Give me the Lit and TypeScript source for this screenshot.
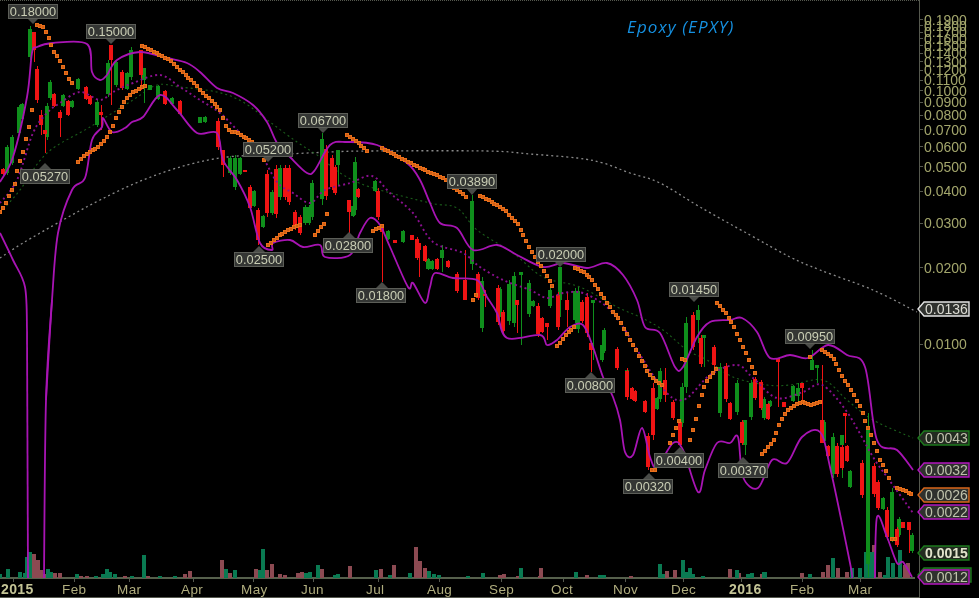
import { LitElement, css, html, svg } from 'lit';
import { customElement } from 'lit/decorators.js';

type Pt = [number, number];
// x, high, low, optional body top / bottom
type Candle = number[];

const W = 979;
const H = 598;
const AXIS_X = 919;

const yOf = (p: number) => 90.5 - 253.5 * Math.log10(p / 0.1);

const upper: Pt[] = [[0,182],[13,157],[27,97],[32,53],[37,47],[53,43],[87,44],[92,72],[100,80],[107,75],[117,60],[140,52],[167,58],[187,63],[200,72],[217,88],[233,93],[253,105],[267,122],[277,143],[290,157],[307,173],[315,170],[330,145],[347,142],[377,145],[407,163],[420,180],[430,203],[440,223],[457,228],[473,250],[497,245],[517,255],[543,267],[563,263],[587,268],[607,263],[623,275],[637,300],[645,327],[660,333],[675,367],[683,367],[697,337],[710,322],[730,320],[742,318],[757,332],[770,358],[790,355],[808,358],[828,345],[847,355],[865,367],[877,440],[897,450],[913,470]];
// the lower band falls off the chart twice, so it is drawn in pieces
const lowerParts: Pt[][] = [
  [[0,233],[13,260],[25,287],[27,330]],
  [[27,330],[28,578]],
  [[44,578],[46,400],[52,300]],
  [[46,400],[52,300],[58,233],[72,190],[85,178],[92,140],[102,127],[103,118],[112,132],[125,128],[132,122],[143,117],[160,95],[177,110],[197,133],[217,133],[223,160],[237,180],[250,207],[260,243],[272,250],[273,243],[290,240],[303,247],[320,245],[325,257],[350,255],[360,233],[370,218],[380,225],[390,247],[408,287],[413,283],[425,303],[430,287],[435,273],[453,278],[477,280],[487,297],[497,313],[507,338],[540,335],[547,345],[557,340],[570,327],[583,325],[593,347],[603,377],[613,397],[620,420],[625,452],[633,455],[642,428],[650,457],[657,467],[673,443],[683,450],[698,492],[705,470],[717,443],[730,443],[738,437],[743,477],[758,488],[772,460],[787,463],[802,437],[820,432],[830,467],[850,563],[852,578]],
  [[875,578],[877,517],[887,537],[897,563],[903,562],[912,577]],
];
const sma20: Pt[] = [[0,203],[17,180],[33,133],[47,113],[60,103],[80,92],[100,100],[113,92],[133,83],[160,75],[180,87],[200,100],[220,113],[240,133],[260,153],[277,182],[293,193],[310,203],[325,190],[350,183],[372,176],[390,193],[413,213],[433,242],[463,253],[480,267],[503,280],[530,290],[547,298],[563,293],[583,293],[607,307],[623,327],[660,385],[683,400],[710,375],[737,365],[753,378],[777,398],[803,392],[822,385],[847,412],[873,457],[887,477],[913,513]];
const sma50: Pt[] = [[0,213],[20,190],[47,153],[90,127],[133,100],[157,85],[180,87],[217,92],[243,102],[270,122],[297,142],[320,157],[340,173],[370,187],[430,203],[457,208],[477,230],[513,253],[543,277],[580,287],[617,307],[640,317],[663,330],[687,350],[707,360],[733,377],[767,385],[790,385],[823,380],[847,400],[873,420],[913,438]];
const sma200: Pt[] = [[0,258],[23,243],[63,220],[100,200],[143,180],[187,165],[227,157],[267,155],[330,152],[370,151],[487,151],[530,154],[577,158],[603,163],[630,173],[660,183],[700,207],[750,235],[790,257],[820,270],[873,290],[917,312]];

const sar: Pt[][] = [
  [[0,212],[5,205],[10,193],[15,183],[18,168],[23,153],[25,143],[28,133],[31,116],[33,102]],
  [[37,25],[42,26],[46,32],[49,39],[52,46],[55,53],[58,57],[61,62],[63,67],[66,73],[68,78],[72,83],[74,88]],
  [[78,162],[83,157],[88,153],[93,150],[98,147],[103,143],[108,136],[112,128],[117,115],[121,108],[124,103],[127,98],[132,93],[137,90],[142,87],[147,85]],
  [[142,46],[150,50],[160,55],[170,60],[180,70],[193,82],[205,95],[220,109],[223,117],[225,125],[230,131],[237,133],[250,140],[257,147],[266,164]],
  [[268,245],[273,241],[280,235],[290,229],[300,225]],
  [[315,235],[320,228],[325,222],[328,207]],
  [[347,135],[358,143],[370,153]],
  [[382,148],[395,155],[410,163],[425,170],[443,178],[455,188],[468,198]],
  [[373,231],[382,226]],
  [[480,196],[492,202],[505,210],[510,216],[517,223],[524,236],[530,248],[537,260],[543,270],[553,287]],
  [[473,300],[478,292]],
  [[557,346],[562,340],[567,333],[571,330],[575,327]],
  [[575,268],[583,272],[590,277],[597,287],[602,295],[607,303],[613,312],[620,320],[626,332],[632,343],[640,358],[648,372],[655,380],[662,385]],
  [[652,470],[657,470]],
  [[670,443],[675,430],[679,420]],
  [[682,359],[686,360]],
  [[690,440],[695,423],[700,400],[705,385],[710,377],[717,368]],
  [[717,303],[725,312],[730,320],[735,328],[740,340],[747,355],[753,370],[757,377]],
  [[762,454],[767,448],[773,442],[780,423],[784,416],[788,410],[795,405],[803,402],[812,405],[820,402]],
  [[810,357]],
  [[822,350],[833,358],[838,367],[843,377],[848,385],[853,393],[860,407],[864,417],[868,427],[875,445],[880,460],[887,473],[890,482]],
  [[892,539],[896,539]],
  [[897,488],[905,491],[913,495]],
];

const red: Candle[] = [
  [3,168,175],[34,32,62,32,50],[37,66,103],[41,110,135,115,125],[45,130,153,130,134],[54,93,107],[60,110,137,112,118],[68,100,116],[86,86,100],[90,95,105],[101,105,130,112,115],[111,45,105,45,60],[122,70,90],[141,50,90,50,75],[165,90,105],[180,100,115],[218,118,150],[223,150,177,150,165],[245,170,172],[250,185,210],[258,208,245,210,240],[267,170,217],[276,165,218],[285,165,200],[289,165,205],[295,210,230],[300,215,235],[326,145,200],[332,155,190],
  [335,165,195],[349,200,233,200,212],[358,188,198],[378,188,220],[382,225,282,225,232],[395,240,243],[412,235,240],[417,237,260],[419,243,277,243,250],[425,245,262],[437,258,270],[448,260,268],[465,250,300,280,300],[457,272,293],[478,272,300],[485,290,307,294,296],[498,285,325],[503,310,333],[517,300,333,300,305],[538,303,337],[542,317,333],[547,323,340,323,327],[558,292,330],[567,293,327,300,310],[582,300,323],[587,293,337],[591,343,372,343,350],[617,347,370],[627,368,400],[632,387,400],
  [635,390,402],[645,400,413],[653,383,440],[648,433,470],[665,368,402,380,395],[673,400,420],[680,420,447],[693,312,350],[701,335,367],[714,345,367],[726,363,402],[730,402,420],[742,420,445],[755,377,400],[761,380,410],[768,403,420],[778,358,407,358,362],[784,402,407],[802,383,400,383,388],[822,365,443,420,443],[828,445,457],[837,443,477],[842,445,470],[847,445,462],[845,413,443,413,416],[862,460,498],[874,463,497],[878,480,510],[887,507,540],[897,527,547],[903,522,528],[909,522,553,522,530],
];
const green: Candle[] = [
  [7,145,175],[12,135,165],[19,105,135],[22,103,120],[30,26,60],[47,103,140],[50,80,100],[63,94,107],[72,100,108],[78,78,90],[97,100,127],[108,60,97],[116,60,87],[127,72,90],[131,47,80],[144,68,103,68,80],[150,85,90],[158,85,100],[172,97,105],[200,117,123],[205,116,123],[230,156,175],[235,155,190],[240,157,175],[254,190,207],[263,215,228],[272,190,215],[280,165,200],[305,205,225],[309,205,225],[312,180,220],[322,133,205],
  [338,150,185,150,165],[353,205,217],[355,157,215],[375,180,192],[388,230,240],[403,230,243],[428,258,270],[432,260,270],[442,245,272,250,258],[472,195,270],[482,277,332],[500,287,317],[509,280,325],[514,272,327],[521,272,345,272,275],[529,280,317],[533,300,307],[550,288,308],[560,267,317,267,300],[575,288,323],[578,287,333],[593,300,360,300,303],[602,343,362],[604,328,353],
  [627,368,395],[657,397,410],[660,368,402],[682,383,427],[686,317,393],[698,305,343,310,320],[704,335,367,335,338],[720,363,417],[737,380,415],[745,420,455,420,445],[751,380,420],[764,397,420],[770,400,407],[793,385,402],[798,383,402,388,396],[812,350,370,360,370],[817,365,383,365,368],[824,420,443],[833,433,478],[842,435,478,435,445],[850,470,488],[868,413,577],[883,497,510],[892,488,542],[899,517,537],[912,533,553],
];

// x, top of bar
const volG: Pt[] = [[0,574],[8,569],[20,572],[25,573],[27,557],[30,552],[48,569],[51,572],[77,574],[96,576],[103,574],[107,569],[110,572],[115,574],[132,576],[144,555],[160,576],[175,576],[226,569],[235,570],[263,549],[260,570],[306,573],[310,572],[318,565],[335,575],[338,574],[376,570],[390,575],[410,573],[429,571],[434,574],[439,575],[468,576],[483,573],[521,568],[576,572],[600,575],[604,575],[660,564],[663,574],[683,560],[686,572],[690,568],[693,574],[703,576],[737,570],[748,574],[752,573],[764,572],[765,572],[810,574],[833,558],[852,568],[860,568],[866,552],[869,552],[872,552],[888,557],[893,563],[900,550],[885,575]];
const volR: Pt[] = [[34,554],[38,560],[41,570],[44,574],[55,573],[60,573],[81,576],[87,576],[125,576],[148,576],[185,574],[190,571],[222,560],[230,573],[256,569],[267,570],[272,564],[280,574],[285,575],[298,573],[302,572],[322,569],[350,566],[381,569],[394,565],[416,547],[420,561],[425,568],[500,575],[504,574],[518,576],[541,568],[540,576],[587,575],[631,576],[667,571],[675,570],[730,569],[739,573],[762,574],[802,573],[823,572],[828,565],[838,568],[847,572],[874,545],[880,572],[905,565],[908,563]];

const callouts: [string, number, number, number, number][] = [
  // text, box x, box y, tip x, tip y
  ['0.18000', 8, 4, 33, 24],
  ['0.15000', 86, 24, 111, 44],
  ['0.05270', 20, 169, 45, 163],
  ['0.05200', 243, 142, 268, 162],
  ['0.06700', 298, 113, 323, 133],
  ['0.02500', 234, 252, 259, 246],
  ['0.02800', 323, 238, 349, 232],
  ['0.03890', 447, 174, 472, 195],
  ['0.01800', 356, 288, 382, 282],
  ['0.02000', 536, 247, 560, 267],
  ['0.00800', 565, 378, 591, 372],
  ['0.01450', 669, 282, 694, 302],
  ['0.00950', 785, 329, 810, 349],
  ['0.00400', 654, 453, 680, 447],
  ['0.00370', 718, 463, 743, 457],
  ['0.00320', 623, 479, 649, 473],
];

const priceTags: [string, number, string][] = [
  ['0.0136', 309, 'white'],
  ['0.0043', 438, 'lime'],
  ['0.0032', 470, 'pink'],
  ['0.0026', 495, 'amber'],
  ['0.0022', 512, 'pink'],
  ['0.0015', 553, 'lime bold'],
  ['0.0013', 575, 'lime'],
  ['0.0012', 577, 'pink'],
];

const axisPrices = [0.19,0.18,0.17,0.16,0.15,0.14,0.13,0.12,0.11,0.1,0.09,0.08,0.07,0.06,0.05,0.04,0.03,0.02,0.01];

const months: [string, number, boolean][] = [
  ['2015',1,true],['Feb',62,false],['Mar',117,false],['Apr',181,false],['May',241,false],['Jun',301,false],['Jul',366,false],['Aug',427,false],['Sep',489,false],['Oct',551,false],['Nov',613,false],['Dec',671,false],['2016',729,true],['Feb',790,false],['Mar',848,false],
];

// catmull-rom through the points, the bands are rounded curves
function smooth(p: Pt[]): string {
  let d = `M${p[0][0]} ${p[0][1]}`;
  for (let i = 0; i < p.length - 1; i++) {
    const a = p[Math.max(i - 1, 0)];
    const b = p[i];
    const c = p[i + 1];
    const e = p[Math.min(i + 2, p.length - 1)];
    const c1x = b[0] + (c[0] - a[0]) / 6;
    const c1y = b[1] + (c[1] - a[1]) / 6;
    const c2x = c[0] - (e[0] - b[0]) / 6;
    const c2y = c[1] - (e[1] - b[1]) / 6;
    d += ` C${c1x.toFixed(1)} ${c1y.toFixed(1)} ${c2x.toFixed(1)} ${c2y.toFixed(1)} ${c[0]} ${c[1]}`;
  }
  return d;
}

// one SAR dot per trading day, bars are about 2.9px apart
function dotsAlong(line: Pt[], step = 2.9): Pt[] {
  const out: Pt[] = [line[0]];
  let x = line[0][0] + step;
  for (let i = 1; i < line.length; i++) {
    const [ax, ay] = line[i - 1];
    const [bx, by] = line[i];
    while (x <= bx) {
      out.push([x, ay + ((by - ay) * (x - ax)) / (bx - ax)]);
      x += step;
    }
  }
  return out;
}

@customElement('app-root')
export class AppRoot extends LitElement {
  static styles = css`
    :host {
      display: block;
      width: 979px;
      height: 598px;
      background: #000;
      overflow: hidden;
    }
    svg {
      display: block;
      filter: blur(0.35px);
    }
    text {
      font-family: 'Liberation Sans', Arial, sans-serif;
    }
    .frame {
      stroke: #55584e;
      stroke-width: 1;
      shape-rendering: crispEdges;
    }
    .top {
      stroke-dasharray: 1 1;
    }
    .bb {
      fill: none;
      stroke: #a814b4;
      stroke-width: 1.8;
      stroke-linejoin: round;
    }
    .dots {
      fill: none;
      stroke-dasharray: 2 3;
    }
    .m20 {
      stroke: #8a0f8e;
      stroke-width: 1.9;
    }
    .m50 {
      stroke: #1b5f1b;
      stroke-width: 1.1;
    }
    .m200 {
      stroke: #8a8a8a;
      stroke-width: 1.3;
    }
    .candles rect {
      shape-rendering: crispEdges;
    }
    .r {
      fill: #f01414;
    }
    .g {
      fill: #0f8f1c;
    }
    .vg {
      fill: #0a7a52;
    }
    .vr {
      fill: #8c4a52;
    }
    .base {
      fill: #56604c;
    }
    .sar {
      fill: #cf5e14;
      stroke: #ea6f1a;
      stroke-width: 1;
      shape-rendering: crispEdges;
    }
    .box {
      fill: #343634;
      stroke: #5c5e58;
      stroke-width: 1;
      shape-rendering: crispEdges;
    }
    .tip {
      fill: #4a4c48;
    }
    .box-text {
      fill: #c9cdb4;
      font-size: 12.8px;
      text-anchor: middle;
    }
    .price {
      fill: #a3a66c;
      font-size: 14px;
    }
    .month {
      fill: #b0ad7e;
      font-size: 13.5px;
      letter-spacing: 0.4px;
    }
    .year {
      font-weight: 700;
      font-size: 14px;
      fill: #c4c496;
    }
    .title {
      font-family: 'Open Sans', sans-serif;
      fill: #1590e0;
      font-size: 17px;
      font-style: italic;
      letter-spacing: 1.1px;
    }
    .tag {
      stroke-width: 1.4;
      fill: #2f312e;
    }
    .tag-text {
      fill: #bfc2ac;
      font-size: 14px;
    }
    .white .tag {
      stroke: #e4e4e4;
    }
    .white .tag-text {
      fill: #dcdcd4;
    }
    .lime .tag {
      stroke: #1d7a1d;
      fill: #222b20;
    }
    .pink .tag {
      stroke: #b316bd;
    }
    .amber .tag {
      stroke: #d9661a;
    }
    .bold .tag-text {
      font-weight: 700;
      fill: #e2e4cc;
    }
  `;

  private candle(c: Candle, cls: string) {
    const [x, hi, lo] = c;
    const inset = (lo - hi) * 0.08;
    const top = c.length > 3 ? c[3] : hi + inset;
    const bot = c.length > 3 ? c[4] : lo - inset;
    return svg`
      <rect class=${cls} x=${x} y=${hi} width="1" height=${lo - hi}></rect>
      <rect class=${cls} x=${x - 2} y=${top} width="4" height=${Math.max(bot - top, 1)}></rect>
    `;
  }

  private volumeBar([x, top]: Pt, cls: string) {
    return svg`<rect class=${cls} x=${x - 2} y=${top} width="4" height=${578 - top}></rect>`;
  }

  private callout([label, x, y, tx, ty]: [string, number, number, number, number]) {
    const w = 49;
    const h = 14;
    const edge = ty > y ? y + h : y;
    return svg`
      <polygon class="tip" points="${tx - 6},${edge} ${tx + 6},${edge} ${tx},${ty}"></polygon>
      <rect class="box" x=${x + 0.5} y=${y + 0.5} width=${w} height=${h}></rect>
      <text class="box-text" x=${x + w / 2 + 0.5} y=${y + 11.5}>${label}</text>
    `;
  }

  private tag([label, y, cls]: [string, number, string]) {
    const right = label === '0.0013' ? 971 : 969;
    const d = `M918 ${y} L924 ${y - 7} H${right} V${y + 7} H924 Z`;
    return svg`
      <g class=${cls}>
        <path class="tag" d=${d}></path>
        <text class="tag-text" x="925" y=${y + 5}>${label}</text>
      </g>
    `;
  }

  render() {
    return html`
      <svg width=${W} height=${H} viewBox="0 0 ${W} ${H}">
        <line class="frame top" x1="0" y1="0.5" x2=${AXIS_X} y2="0.5"></line>
        <line class="frame" x1="0" y1="597.5" x2=${AXIS_X} y2="597.5"></line>
        <line class="frame" x1=${AXIS_X + 0.5} y1="0" x2=${AXIS_X + 0.5} y2=${H}></line>

        ${axisPrices.map((p) => svg`
          <line class="frame" x1="920" y1=${yOf(p)} x2="923" y2=${yOf(p)}></line>
          <text class="price" x="924" y=${yOf(p) + 5}>${p.toFixed(4)}</text>
        `)}

        <rect class="base" x="0" y="577" width="915" height="2"></rect>
        ${volR.map((v) => this.volumeBar(v, 'vr'))}
        ${volG.map((v) => this.volumeBar(v, 'vg'))}

        ${months.map(([m, x, year]) => svg`
          <line class="frame" x1=${x + 12} y1="579" x2=${x + 12} y2="582"></line>
          <text class=${year ? 'month year' : 'month'} x=${x} y="594">${m}</text>
        `)}

        <path class="dots m200" d=${smooth(sma200)}></path>
        <path class="dots m50" d=${smooth(sma50)}></path>

        <g class="candles">
          ${green.map((c) => this.candle(c, 'g'))}
          ${red.map((c) => this.candle(c, 'r'))}
        </g>

        <path class="dots m20" d=${smooth(sma20)}></path>
        <path class="bb" d=${smooth(upper)}></path>
        ${lowerParts.map((part) => svg`<path class="bb" d=${smooth(part)}></path>`)}

        ${sar.map((seg) => dotsAlong(seg).map(([x, y]) => svg`
          <rect class="sar" x=${Math.round(x) - 1.5} y=${Math.round(y) - 1.5} width="3" height="3"></rect>
        `))}

        ${callouts.map((c) => this.callout(c))}
        ${priceTags.map((t) => this.tag(t))}

        <text class="title" x="627" y="33">Epoxy (EPXY)</text>
      </svg>
    `;
  }
}
